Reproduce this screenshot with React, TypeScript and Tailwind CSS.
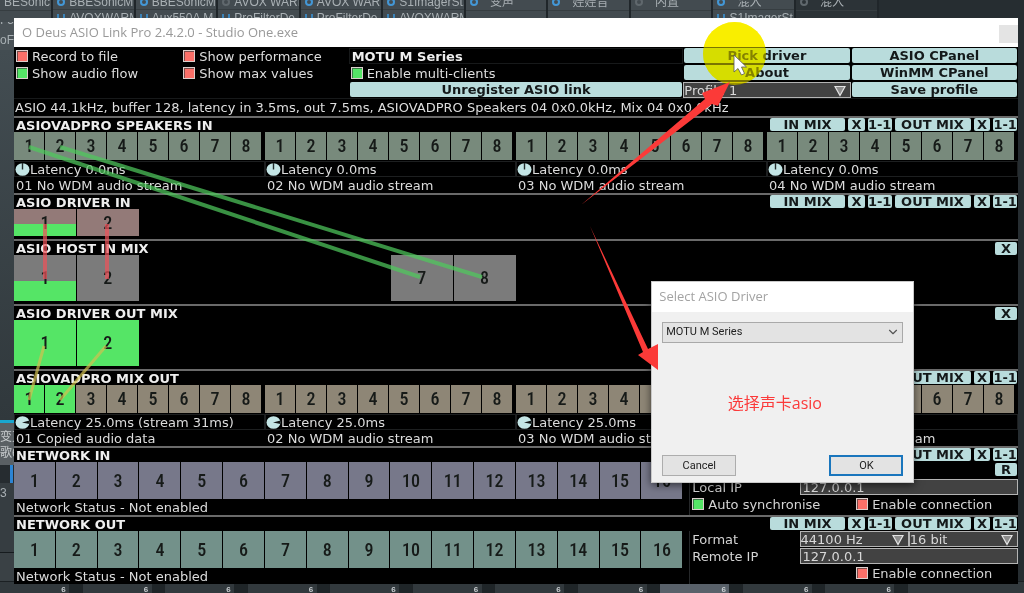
import { useId, type ReactNode } from "react";
import { ChevronDown } from "lucide-react";

function Check({ label, on = false, className = "" }: { label: string; on?: boolean; className?: string }) {
  const id = useId();
  return (
    <div className={"flex min-w-0 items-center gap-1 " + className}>
      <input
        id={id}
        type="checkbox"
        defaultChecked={on}
        className="ml-0.5 size-3 shrink-0 appearance-none border border-[#dccfcd] bg-[#fb7069] shadow-[inset_1px_1px_0_#7a4b48] checked:bg-[#55e566] checked:shadow-[inset_1px_1px_0_#3b7a48]"
      />
      <label htmlFor={id} className="whitespace-nowrap">{label}</label>
    </div>
  );
}

function Btn({ children, className = "" }: { children: ReactNode; className?: string }) {
  return (
    <button
      type="button"
      className={"flex items-center justify-center whitespace-nowrap rounded-xs bg-[#b9dcdc] text-[13px] leading-none font-bold text-[#14191a] " + className}
    >
      {children}
    </button>
  );
}

function Drop({ label, options, className = "" }: { label: string; options: string[]; className?: string }) {
  return (
    <div className={"relative h-4 min-w-0 border border-[#b4b4b4] bg-[#424242] " + className}>
      <select aria-label={label} className="block h-full w-full appearance-none bg-transparent text-[13px] leading-none text-[#d8d8d8] outline-none">
        {options.map((o) => (
          <option key={o}>{o}</option>
        ))}
      </select>
      <svg viewBox="0 0 12 11" className="pointer-events-none absolute top-0.5 right-1 h-3 w-3">
        <path d="M1 1H11L6 10Z" fill="#8d8d8d" stroke="#e4e4e4" strokeWidth="1.2" />
      </svg>
    </div>
  );
}

function MixButtons() {
  return (
    <div className="grid h-[13px] w-1/4 grid-cols-[76fr_17fr_24fr_77fr_17fr_24fr] gap-[3px] pr-px pl-[3px]">
      <Btn>IN MIX</Btn>
      <Btn>X</Btn>
      <Btn>1-1</Btn>
      <Btn>OUT MIX</Btn>
      <Btn>X</Btn>
      <Btn>1-1</Btn>
    </div>
  );
}

function Clear({ children = "X" }: { children?: string }) {
  return <Btn className="mr-px h-[13px] w-[22px]">{children}</Btn>;
}

function Section({ title, actions, children, className = "" }: { title: string; actions: ReactNode; children: ReactNode; className?: string }) {
  return (
    <section className={"border-t-2 border-[#6a6a6a] " + className}>
      <header className="relative flex h-3.5 items-center justify-between">
        <h2 className="pl-0.5 text-[13px] leading-none font-bold whitespace-nowrap text-[#eeeeee]">{title}</h2>
        {actions}
      </header>
      {children}
    </section>
  );
}

function WideActions() {
  return (
    <div className="absolute inset-x-0 top-0 flex justify-end">
      <MixButtons />
    </div>
  );
}

function Cell({ n, tone, level = 0 }: { n: number; tone: string; level?: number }) {
  return (
    <div className={"relative flex items-center justify-center " + tone}>
      {level > 0 && <div className="absolute inset-x-0 bottom-0 bg-[#55e566]" style={{ height: `${level}%` }} />}
      <span className="relative font-['Roboto_Condensed','Open_Sans_Condensed','Noto_Sans_Condensed',Roboto,sans-serif] text-lg leading-none font-medium text-[#161a18]">{n}</span>
    </div>
  );
}

function Dial({ side = false }: { side?: boolean }) {
  return (
    <svg viewBox="0 0 15 13" className="h-[13px] w-[15px] shrink-0">
      <ellipse cx="7.5" cy="6.5" rx="7" ry="6.3" fill="#c4e6e6" />
      {side ? <path d="M7 6.5L14.5 4.6V8Z" fill="#101414" /> : <path d="M7.5 0V6.5" stroke="#222b2b" strokeWidth="1.4" />}
    </svg>
  );
}

const eight = [1, 2, 3, 4, 5, 6, 7, 8];
const sixteen = [...eight, 9, 10, 11, 12, 13, 14, 15, 16];

type Stream = { latency: string; status: string };

function StreamBank({ streams, tone, side = false, lit = 0 }: { streams: Stream[]; tone: string; side?: boolean; lit?: number }) {
  return (
    <div className="grid grid-cols-4">
      {streams.map((s, i) => (
        <div key={s.status} className="min-w-0">
          <div className="mr-1 grid h-7 grid-cols-8 gap-px">
            {eight.map((n) => (
              <Cell key={n} n={n} tone={tone} level={i === 0 && n <= lit ? 100 : 0} />
            ))}
          </div>
          <div className="mt-px flex h-4 items-center border border-[#1d1f20] leading-none text-[#dcdcdc]">
            <Dial side={side} />
            <span className="whitespace-nowrap">{s.latency}</span>
          </div>
          <div className="flex h-4 items-center pl-0.5 leading-none whitespace-nowrap text-[#dcdcdc]">{s.status}</div>
        </div>
      ))}
    </div>
  );
}

const speakers: Stream[] = [
  { latency: "Latency 0.0ms", status: "01 No WDM audio stream" },
  { latency: "Latency 0.0ms", status: "02 No WDM audio stream" },
  { latency: "Latency 0.0ms", status: "03 No WDM audio stream" },
  { latency: "Latency 0.0ms", status: "04 No WDM audio stream" },
];

const mixOut: Stream[] = [
  { latency: "Latency 25.0ms (stream 31ms)", status: "01 Copied audio data" },
  { latency: "Latency 25.0ms", status: "02 No WDM audio stream" },
  { latency: "Latency 25.0ms", status: "03 No WDM audio stream" },
  { latency: "Latency 25.0ms", status: "04 No WDM audio stream" },
];

function NetworkBank({ tone, children }: { tone: string; children: ReactNode }) {
  return (
    <div className="grid grid-cols-[2fr_1fr]">
      <div className="min-w-0">
        <div className="mr-px grid h-[37px] grid-cols-16 gap-px">
          {sixteen.map((n) => (
            <Cell key={n} n={n} tone={tone} />
          ))}
        </div>
        <div className="flex h-4 items-center pl-0.5 leading-none text-[#dcdcdc]">Network Status - Not enabled</div>
      </div>
      <div className="ml-1.5 flex min-w-0 flex-col gap-px border-l border-[#26282a] leading-none text-[#d4d4d4]">{children}</div>
    </div>
  );
}

function Address({ label }: { label: string }) {
  const id = useId();
  return (
    <div className="grid h-4 grid-cols-[1fr_2fr] items-center">
      <label htmlFor={id} className="pl-0.5">{label}</label>
      <input id={id} defaultValue="127.0.0.1" className="h-4 w-full min-w-0 border border-[#b4b4b4] bg-[#424242] pl-0.5 text-[13px] leading-none text-[#d8d8d8] outline-none" />
    </div>
  );
}

const tabs = [
  { name: "BESonicM..", sub: "", on: true },
  { name: "BBESonicM..", sub: "AVOXWARM", on: true },
  { name: "BBESonicM..", sub: "Aux550A M..", on: true },
  { name: "AVOX WARM", sub: "ProFilterDe..", on: false },
  { name: "AVOX WARM", sub: "ProFilterDe..", on: true },
  { name: "S1ImagerSt..", sub: "AVOXWARM", on: true },
  { name: "变声", sub: "", on: true },
  { name: "娃娃音", sub: "", on: true },
  { name: "内置", sub: "", on: false },
  { name: "混入", sub: "S1ImagerSt..", on: true },
  { name: "混入", sub: "", on: false },
];

function Mixer() {
  return (
    <div className="absolute inset-0 flex flex-col justify-between overflow-hidden bg-[#262d31] font-['Liberation_Sans','Noto_Sans_CJK_SC',sans-serif] text-xs text-[#a9b0b4]">
      <div className="flex h-[22px]">
        {tabs.map((t, i) => (
          <div
            key={i}
            className={
              "flex shrink-0 flex-col overflow-hidden border-r-2 border-[#20262a] " +
              (i === 0 ? "w-[5.2%] " : "w-[8.06%] ") +
              (i === 10 ? "bg-[#2c3337]" : "bg-[#434b50]")
            }
          >
            <div className="-mt-1.5 flex h-[18px] items-center gap-1 border-b border-[#363d41] pl-1 leading-none whitespace-nowrap">
              {i > 0 && <span className={"size-2 shrink-0 rounded-full border-2 " + (t.on ? "border-[#4397d6]" : "border-[#60686d]")} />}
              <span className={t.name.length < 4 ? "pl-2" : ""}>{t.name}</span>
            </div>
            <div className="flex h-3 items-center gap-1 pt-1 pl-1 leading-none whitespace-nowrap">
              {t.sub && <span className="h-2 w-2 shrink-0 border-x-2 border-[#3c83b8]" />}
              {t.sub}
            </div>
          </div>
        ))}
      </div>
      <div className="flex w-3.5 flex-1 flex-col overflow-hidden bg-[#3a4347] leading-none">
        <div className="-mt-2 h-9 bg-[#4a5257] whitespace-nowrap">
          <div>I-550</div>
          <div className="pt-2">oFilter</div>
        </div>
        <div className="flex-1 bg-linear-to-b from-[#434d52] to-[#30383c]" />
        <div className="h-[3px] bg-[#19a7cf]" />
        <div className="flex h-[42px] flex-col gap-1 bg-[#5a6064] pt-2 whitespace-nowrap text-[#c6cacc]">
          <span>变克</span>
          <span>歌6</span>
        </div>
        <div className="flex h-[18px] justify-end bg-[#262c30] pr-px">
          <span className="w-[3px] bg-[#2b84d4]" />
        </div>
        <div className="h-[70px] border-b border-[#161b1e] bg-[#363d41] pt-1">3</div>
        <div className="h-7 bg-[#3a4145]" />
      </div>
      <div className="flex h-3 border-t border-[#1b2023] bg-[#32393d]">
        {Array.from({ length: 11 }, (_, i) => (
          <div key={i} className={"flex w-[8.06%] shrink-0 border-r border-[#1f2427] " + (i === 8 ? "bg-[#59616a]" : "")}>
            <span className="w-3/4" />
            <span className="w-2 pt-1 text-[8px] leading-none font-bold text-[#c9cdd0]">6</span>
            <span className="flex-1 bg-[#1f2528]" />
          </div>
        ))}
      </div>
    </div>
  );
}

function DriverDialog() {
  return (
    <div
      role="dialog"
      aria-label="Select ASIO Driver"
      className="absolute top-[281px] left-[63.6%] flex h-[202px] w-[25.7%] flex-col border border-[#c9c9c9] bg-[#f0f0f0] font-[Roboto,sans-serif] text-[11px] text-[#222222] shadow-[0_2px_8px_rgba(0,0,0,0.6)]"
    >
      <div className="flex h-[30px] items-center bg-white pl-[7px] font-['Open_Sans',sans-serif] text-[13px] text-[#a3a3a3]">Select ASIO Driver</div>
      <div className="relative mx-2.5 mt-2.5 h-[21px] border border-[#a9a9a9] bg-[#e3e3e3]">
        <select aria-label="ASIO driver" className="block h-full w-full appearance-none bg-transparent pl-[3px] outline-none">
          <option>MOTU M Series</option>
        </select>
        <ChevronDown className="pointer-events-none absolute top-0.5 right-0.5 size-3.5 text-[#555555]" strokeWidth={2} />
      </div>
      <p className="flex flex-1 items-center justify-center pt-2 pr-4 font-['Open_Sans','Noto_Sans_CJK_SC',sans-serif] text-base leading-none text-[#fb3a3a]">选择声卡asio</p>
      <div className="mx-2.5 mb-1.5 flex h-[21px] justify-between">
        <button type="button" className="w-[74px] border border-[#adadad] bg-[#e3e3e3] leading-none">Cancel</button>
        <button type="button" className="w-[74px] border-2 border-[#1a76bd] bg-[#e3e3e3] leading-none">OK</button>
      </div>
    </div>
  );
}

export default function App() {
  return (
    <div className="relative min-h-screen overflow-hidden font-['DejaVu_Sans',sans-serif]">
      <Mixer />
      <main className="relative pt-[18px] pr-1.5 pb-[9px] pl-3.5">
        <div className="bg-black text-[13px] leading-none text-[#dedede]">
          <div className="flex h-[29px] items-start justify-between bg-white">
            <h1 className="pt-2 pl-2 font-['Open_Sans',sans-serif] text-[13px] leading-none text-[#999999]">O Deus ASIO Link Pro 2.4.2.0 - Studio One.exe</h1>
            <button type="button" aria-label="Close" className="mt-[7px] h-[18px] w-[19px] bg-[#e4e4e4]" />
          </div>
          <div className="grid grid-cols-6 grid-rows-3 gap-y-px pt-px">
            <Check label="Record to file" className="h-4" />
            <Check label="Show performance" className="h-4" />
            <div className="col-span-2 flex h-4 items-center border border-[#17191a] pl-0.5 font-bold text-[#eeeeee]">MOTU M Series</div>
            <Btn className="mx-px h-[15px]">Pick driver</Btn>
            <Btn className="mx-px h-[15px]">ASIO CPanel</Btn>
            <Check label="Show audio flow" on className="h-4" />
            <Check label="Show max values" className="h-4" />
            <Check label="Enable multi-clients" on className="col-span-2 h-4" />
            <Btn className="mx-px h-[15px]">About</Btn>
            <Btn className="mx-px h-[15px]">WinMM CPanel</Btn>
            <Btn className="col-span-2 col-start-3 mx-px h-[15px]">Unregister ASIO link</Btn>
            <Drop label="Profile" options={["Profile 1"]} />
            <Btn className="mx-px h-[15px]">Save profile</Btn>
          </div>
          <div className="flex h-[18px] items-center border-t border-[#17191a] pl-px whitespace-nowrap">
            ASIO 44.1kHz, buffer 128, latency in 3.5ms, out 7.5ms, ASIOVADPRO Speakers 04 0x0.0kHz, Mix 04 0x0.0kHz
          </div>

          <Section title="ASIOVADPRO SPEAKERS IN" actions={<WideActions />}>
            <StreamBank streams={speakers} tone="bg-[#788a7c]" />
          </Section>
          <Section title="ASIO DRIVER IN" actions={<WideActions />}>
            <div className="mb-[3px] grid h-[27px] grid-cols-16 gap-px">
              <Cell n={1} tone="bg-[#937a78]" level={44} />
              <Cell n={2} tone="bg-[#937a78]" />
            </div>
          </Section>
          <Section title="ASIO HOST IN MIX" actions={<Clear />}>
            <div className="mb-[3px] grid h-[46px] grid-cols-16 gap-px">
              <Cell n={1} tone="bg-[#7b7b7b]" level={44} />
              <Cell n={2} tone="bg-[#7b7b7b]" />
              <div className="col-span-4" />
              <Cell n={7} tone="bg-[#7b7b7b]" />
              <Cell n={8} tone="bg-[#7b7b7b]" />
            </div>
          </Section>
          <Section title="ASIO DRIVER OUT MIX" actions={<Clear />}>
            <div className="mb-[3px] grid h-[46px] grid-cols-16 gap-px">
              <Cell n={1} tone="bg-[#7b7b7b]" level={100} />
              <Cell n={2} tone="bg-[#7b7b7b]" level={100} />
            </div>
          </Section>
          <Section title="ASIOVADPRO MIX OUT" actions={<WideActions />}>
            <StreamBank streams={mixOut} tone="bg-[#8e8676]" side lit={2} />
          </Section>
          <Section title="NETWORK IN" actions={<WideActions />}>
            <NetworkBank tone="bg-[#77788a]">
              <div className="flex h-4 justify-end pt-px">
                <Clear>R</Clear>
              </div>
              <Address label="Local IP" />
              <div className="grid grid-cols-2">
                <Check label="Auto synchronise" on className="h-4" />
                <Check label="Enable connection" className="h-4" />
              </div>
            </NetworkBank>
          </Section>
          <Section title="NETWORK OUT" actions={<WideActions />}>
            <NetworkBank tone="bg-[#73918a]">
              <div className="grid h-4 grid-cols-3 items-center">
                <span className="pl-0.5">Format</span>
                <Drop label="Sample rate" options={["44100 Hz"]} />
                <Drop label="Bit depth" options={["16 bit"]} />
              </div>
              <Address label="Remote IP" />
              <div className="grid grid-cols-2">
                <Check label="Enable connection" className="col-start-2 h-4" />
              </div>
            </NetworkBank>
          </Section>
        </div>
      </main>

      <svg viewBox="0 0 1024 593" preserveAspectRatio="none" className="pointer-events-none absolute top-0 left-0 h-[593px] w-full" fill="none">
        <g stroke="#4fc95d" strokeOpacity="0.72" strokeWidth="4">
          <path d="M29 147L420 277" />
          <path d="M60 147L482 277" />
        </g>
        <g stroke="#f0525a" strokeOpacity="0.7" strokeWidth="4">
          <path d="M45 224V279" />
          <path d="M107 224V279" />
        </g>
        <g stroke="#d2c050" strokeOpacity="0.7" strokeWidth="3">
          <path d="M44 346L29 400" />
          <path d="M106 346L60 400" />
        </g>
      </svg>

      <div className="pointer-events-none absolute top-[22px] left-[68.7%] size-[63px] rounded-full bg-[#fff200] mix-blend-multiply" />
      <div className="pointer-events-none absolute top-[22px] left-[68.7%] size-[63px] rounded-full bg-[#f4ea00]/50" />

      <DriverDialog />

      <svg viewBox="0 0 1024 593" preserveAspectRatio="none" className="pointer-events-none absolute top-0 left-0 h-[593px] w-full">
        <path d="M734 55V72L738 68.500L741.500 75L744.500 73.500L741.500 67H746.500Z" fill="#ffffff" stroke="#555555" strokeWidth="0.8" />
        <path d="M581 205L705 99L702 93L730 82L718 106L712 104Z" fill="#fb3a38" />
        <path d="M590 226L648 349L658 344V370L638 355L643 352Z" fill="#fb3a38" />
      </svg>
    </div>
  );
}
